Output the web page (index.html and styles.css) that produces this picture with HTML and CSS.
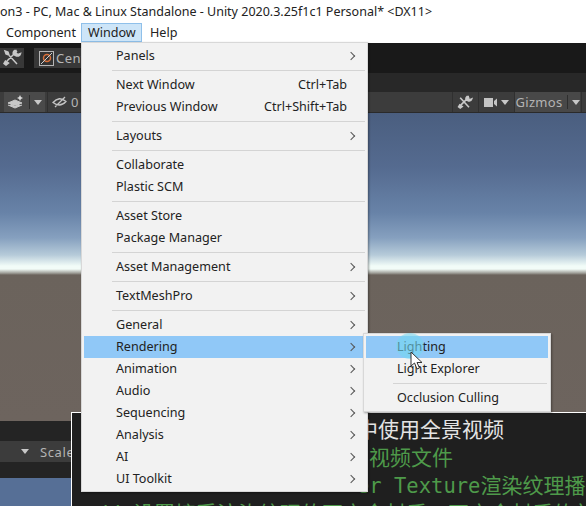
FILE: index.html
```html
<!doctype html>
<html>
<head>
  <meta charset="utf-8">
  <title>Unity Window Menu</title>
  <link rel="stylesheet" href="styles.css">
</head>
<body>
  <div id="page">
    <div class="titlebar">on3 - PC, Mac &amp; Linux Standalone - Unity 2020.3.25f1c1 Personal* &lt;DX11&gt;</div>
    <div class="menubar">
      <span class="menubar-item">Component</span>
      <span class="menubar-item open">Window</span>
      <span class="menubar-item">Help</span>
    </div>

    <div class="toolbar">
      <span class="tool-btn tools-btn">
        <svg width="20" height="18" viewBox="0 0 20 18"><path d="M4 3 L15 15 M3 2 l3 1 1 3 -3 -1z M15 2 L5 12 M12.5 1.5 a3.5 3.5 0 0 0 -1 4 l3 1.500 a3.500 3.500 0 0 0 4 -2.500 l-2.500 1 -2 -1.500 0 -2.500z M3.500 12 L2 14.500 4 16 6.500 14z" fill="#c8c8c8" stroke="#c8c8c8" stroke-width="1.500"/></svg>
      </span>
      <span class="tool-btn center-btn">
        <svg width="15" height="15" viewBox="0 0 15 15"><rect x="0.500" y="0.500" width="14" height="14" fill="#333" stroke="#b5b5b5"/><circle cx="8" cy="7" r="3.500" fill="none" stroke="#d8703a" stroke-width="1.500"/><path d="M2 13 L13 2" stroke="#cfcfcf"/></svg>
        Center
      </span>
    </div>
    <div class="tabbar"></div>
    <div class="scenebar">
      <div class="scenebar-left">
        <span class="bar-btn layer-btn">
          <svg width="18" height="14" viewBox="0 0 18 14"><path d="M1 8 L8 5 15 8 8 11z M1 10 L8 13 15 10" fill="#c8c8c8" stroke="#c8c8c8"/><path d="M13 0 l1 2 2 1 -2 1 -1 2 -1 -2 -2 -1 2 -1z" fill="#d8d8d8"/></svg>
          <i class="bar-rule"></i>
          <i class="caret"></i>
        </span>
        <span class="bar-btn eye-btn">
          <svg width="15" height="12" viewBox="0 0 15 12"><path d="M1 6.500 Q7 -0.500 14 5.500 Q8 12 1 6.500z M3 11 L13 1" fill="none" stroke="#c4c4c4" stroke-width="1.300"/></svg>
          0
        </span>
      </div>
      <div class="scenebar-right">
        <span class="bar-btn">
          <svg width="16" height="15" viewBox="0 0 20 18"><path d="M4 3 L15 15 M15 2 L5 12 M12.500 1.500 a3.500 3.500 0 0 0 -1 4 l3 1.500 a3.500 3.500 0 0 0 4 -2.500 l-2.500 1 -2 -1.500 0 -2.500z M3.500 12 L2 14.500 4 16 6.500 14z" fill="#c8c8c8" stroke="#c8c8c8" stroke-width="2"/></svg>
        </span>
        <span class="bar-btn camera-btn">
          <svg width="13" height="9" viewBox="0 0 13 9"><rect width="9" height="9" fill="#c4c4c4"/><path d="M10 3 L13 0.500 13 8.500 10 6z" fill="#c4c4c4"/></svg>
          <i class="caret"></i>
        </span>
        <span class="bar-btn gizmos-btn">Gizmos<i class="bar-rule"></i><i class="caret"></i></span>
        <span class="bar-btn end-btn"></span>
      </div>
    </div>
    <div class="scene"></div>
    <div class="gap-row"></div>
    <div class="game-bar">
      <i class="caret"></i>
      <span class="scale-label">Scale</span>
    </div>
    <div class="gap-row short"></div>
    <div class="game-view"></div>
  </div>

  <div class="subtitle">
    <div class="sub-line white">中使用全景视频</div>
    <div class="sub-line green second">视频文件</div>
    <div class="sub-line green"><span class="mono">er Texture</span>渲染纹理播</div>
    <div class="sub-line green last"><span class="mono">// </span>设置接受渲染纹理的不完全封质，不完全封质的着色器</div>
  </div>

  <div class="menu window-menu">
    <div class="item sub">Panels</div>
    <hr>
    <div class="item">Next Window<span class="shortcut">Ctrl+Tab</span></div>
    <div class="item">Previous Window<span class="shortcut">Ctrl+Shift+Tab</span></div>
    <hr>
    <div class="item sub">Layouts</div>
    <hr>
    <div class="item">Collaborate</div>
    <div class="item">Plastic SCM</div>
    <hr>
    <div class="item">Asset Store</div>
    <div class="item">Package Manager</div>
    <hr>
    <div class="item sub">Asset Management</div>
    <hr>
    <div class="item sub">TextMeshPro</div>
    <hr>
    <div class="item sub">General</div>
    <div class="item sub active">Rendering</div>
    <div class="item sub">Animation</div>
    <div class="item sub">Audio</div>
    <div class="item sub">Sequencing</div>
    <div class="item sub">Analysis</div>
    <div class="item sub">AI</div>
    <div class="item sub">UI Toolkit</div>
  </div>

  <div class="menu render-menu">
    <div class="item active">Lighting</div>
    <div class="item">Light Explorer</div>
    <hr>
    <div class="item">Occlusion Culling</div>
  </div>

  <div class="click-glow"></div>
  <svg class="cursor" width="13" height="19" viewBox="0 0 13 19"><path d="M1 1 L1 15 L4.500 12 L7 18 L9.500 17 L7 11.500 L12 11.500z" fill="#fff" stroke="#333"/></svg>
</body>
</html>
```

FILE: styles.css
```css
html, body {
  margin: 0;
  padding: 0;
  width: 586px;
  height: 506px;
  overflow: hidden;
  background: #fff;
  font-family: "Noto Sans", Arial, sans-serif;
  font-size: 12.600px;
  color: #222;
}

#page {
  display: flex;
  flex-direction: column;
  height: 506px;
}

.titlebar {
  height: 21px;
  line-height: 24px;
  flex: none;
  font-size: 12.500px;
  white-space: nowrap;
}
.menubar {
  height: 22px;
  flex: none;
  display: flex;
  align-items: flex-start;
  box-sizing: border-box;
  padding-top: 2px;
}
.menubar-item {
  height: 19px;
  line-height: 18px;
  padding: 0 7px;
  box-sizing: border-box;
  border: 1px solid transparent;
}
.menubar-item:first-child {
  width: 81px;
  padding-left: 5px;
}
.menubar-item.open {
  width: 61px;
  padding-left: 6px;
  background: #cde5f8;
  border-color: #8fc0ea;
}

.toolbar {
  height: 30px;
  flex: none;
  background: #191919;
  display: flex;
  gap: 10px;
  padding-top: 5px;
  box-sizing: border-box;
}
.tool-btn {
  height: 20px;
  background: #383838;
  color: #b8b8b8;
  display: flex;
  align-items: center;
  font-size: 13px;
  letter-spacing: 0.5px;
  white-space: nowrap;
  overflow: hidden;
}
.tool-btn svg {
  flex: none;
}
.tools-btn {
  width: 24px;
  justify-content: center;
}
.center-btn {
  width: 60px;
  padding-left: 5px;
  gap: 2px;
  box-sizing: border-box;
}

.tabbar {
  height: 19px;
  flex: none;
  background: #282828;
}
.scenebar {
  height: 21px;
  flex: none;
  box-sizing: border-box;
  background: #3c3c3c;
  border-bottom: 1px solid #2a2a2a;
  display: flex;
  justify-content: space-between;
}
.scenebar-left, .scenebar-right {
  display: flex;
  gap: 1px;
}
.scenebar-left {
  padding-left: 4px;
  gap: 2px;
}
.bar-btn {
  height: 20px;
  display: flex;
  align-items: center;
  justify-content: center;
  gap: 4px;
  color: #b4b4b4;
  font-size: 13px;
  letter-spacing: 0.300px;
  box-sizing: border-box;
  border-left: 1px solid #303030;
}
.bar-btn svg {
  flex: none;
}
.layer-btn {
  width: 41px;
  background: #4a4a4a;
  border: none;
}
.eye-btn {
  width: 33px;
  justify-content: flex-start;
  padding-left: 4px;
}
.scenebar-right .bar-btn {
  width: 25px;
}
.scenebar-right .camera-btn {
  width: 35px;
}
.scenebar-right .gizmos-btn {
  width: 66px;
  background: #484848;
  padding: 0 3px;
}
.scenebar-right .end-btn {
  width: 5px;
}
.bar-rule {
  width: 1px;
  height: 14px;
  background: #2e2e2e;
  flex: none;
}
.caret {
  width: 0;
  height: 0;
  flex: none;
  border-left: 4px solid transparent;
  border-right: 4px solid transparent;
  border-top: 5px solid #c8c8c8;
}

.scene {
  height: 308px;
  flex: none;
  background: linear-gradient(to bottom,
    #4a5e7f 0,
    #556b90 55px,
    #6883a8 100px,
    #86a0bf 125px,
    #b6cbd9 142px,
    #f2fcf8 153px,
    #f2fcf8 156px,
    #a0a09a 160px,
    #6b635c 162px,
    #6d645e 308px);
}
.gap-row {
  height: 20px;
  flex: none;
  background: #242424;
}
.gap-row.short {
  height: 16px;
}
.game-bar {
  height: 21px;
  flex: none;
  background: #3c3c3c;
  display: flex;
  align-items: center;
  padding-left: 21px;
  gap: 11px;
  color: #b4b4b4;
  font-size: 13px;
  letter-spacing: 0.6px;
}
.game-view {
  flex: 1;
  background: #566f96;
}

.subtitle {
  position: absolute;
  left: 71px;
  top: 412px;
  width: 515px;
  height: 94px;
  box-sizing: border-box;
  padding-top: 1px;
  border-top: 1px solid #fff;
  border-left: 1px solid #fff;
  background: #1f1f1f;
  font-family: "Noto Sans CJK SC", sans-serif;
  font-size: 21px;
  line-height: 28px;
  white-space: nowrap;
  overflow: hidden;
}
.sub-line {
  height: 28px;
  padding-left: 285px;
}
.sub-line.white {
  color: #e4e4e4;
}
.sub-line.green {
  color: #4e9a4a;
}
.sub-line.second {
  padding-left: 297px;
}
.sub-line.last {
  padding-left: 24px;
}
.mono {
  font-family: "DejaVu Sans Mono", monospace;
  font-size: 20.500px;
  white-space: pre;
}

.menu {
  position: absolute;
  box-sizing: border-box;
  background: #f2f2f2;
  border: 1px solid #d8d8d8;
  padding: 2px;
  box-shadow: 1px 1px 2px rgba(0, 0, 0, 0.35);
}
.window-menu {
  left: 81px;
  top: 42px;
  width: 287px;
  height: 450px;
}
.render-menu {
  left: 363px;
  top: 333px;
  width: 188px;
  height: 79px;
}
.item {
  position: relative;
  height: 22px;
  line-height: 21px;
  padding-left: 32px;
  display: flex;
  justify-content: space-between;
  padding-right: 18px;
  white-space: nowrap;
}
.sub::after {
  content: "";
  position: absolute;
  right: 11px;
  top: 8px;
  width: 5px;
  height: 5px;
  border-top: 1px solid #555;
  border-right: 1px solid #555;
  transform: rotate(45deg);
}
.active {
  background: #90c8f7;
}
.menu hr {
  height: 1px;
  border: none;
  background: #d4d4d4;
  margin: 3px 0 3px 28px;
}
.render-menu .item {
  padding-left: 31px;
}
.render-menu hr {
  margin-left: 27px;
  margin-right: 1px;
}

.click-glow {
  position: absolute;
  left: 396px;
  top: 333px;
  width: 28px;
  height: 26px;
  border-radius: 50%;
  background: radial-gradient(circle, rgba(115, 215, 240, 0.6) 60%, rgba(115, 215, 240, 0) 100%);
}
.cursor {
  position: absolute;
  left: 410px;
  top: 351px;
}
```
